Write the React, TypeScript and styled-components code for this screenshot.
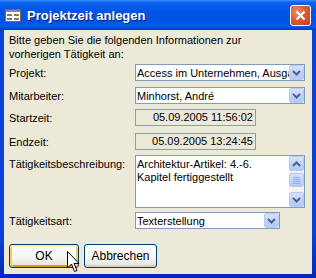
import * as React from 'react';
import styled, { createGlobalStyle } from 'styled-components';

const colors = {
	face: '#ECE9D8',
	frame: '#0842D8',
	frameDark: '#0029B5',
	field: '#7F9DB9',
	text: '#000000',
};

const GlobalStyle = createGlobalStyle`
	html, body {
		margin: 0;
		padding: 0;
		background: ${colors.face};
	}
	* {
		box-sizing: border-box;
	}
`;

const Window = styled.div`
	position: relative;
	width: 316px;
	height: 278px;
	display: flex;
	flex-direction: column;
	background: linear-gradient(to bottom, ${colors.frame} 0%, ${colors.frame} 85%, ${colors.frameDark} 100%);
	font-family: 'Liberation Sans', Arial, sans-serif;
	font-size: 11px;
	color: ${colors.text};
	overflow: hidden;
`;

const TitleBar = styled.div`
	height: 30px;
	display: flex;
	align-items: center;
	padding: 0 5px 0 5px;
	background: linear-gradient(
		to bottom,
		#3D8DFF 0%,
		#0A62F0 8%,
		#0055E6 35%,
		#0053E3 70%,
		#005AF0 88%,
		#0049D8 95%,
		#003CC4 100%
	);
`;

const TitleText = styled.span`
	margin-left: 6px;
	color: #ffffff;
	font-family: 'Liberation Sans', Arial, sans-serif;
	font-weight: bold;
	font-size: 13px;
	text-shadow: 1px 1px 0 #0A1E7A;
`;

const CloseButton = styled.div`
	margin-left: auto;
	width: 21px;
	height: 21px;
	border: 1px solid #ffffff;
	border-radius: 3px;
	background: radial-gradient(circle at 30% 30%, #EE8A6B 0%, #DD5A36 45%, #C43E1C 100%);
	display: flex;
	align-items: center;
	justify-content: center;
`;

const Body = styled.div`
	flex: 1;
	margin: 0 4px 4px;
	background: ${colors.face};
	padding: 3px 5px 0;
	display: flex;
	flex-direction: column;
`;

const Intro = styled.div`
	line-height: 14px;
`;

const Row = styled.div<{ $gap: number; $top?: boolean }>`
	display: flex;
	align-items: ${({ $top }) => ($top ? 'flex-start' : 'center')};
	margin-top: ${({ $gap }) => $gap}px;
`;

const Label = styled.div<{ $top?: boolean }>`
	width: 126px;
	flex-shrink: 0;
	padding-top: ${({ $top }) => ($top ? '3px' : '0')};
`;

const Combo = styled.div<{ $width: number }>`
	width: ${({ $width }) => $width}px;
	height: 17px;
	border: 1px solid ${colors.field};
	background: #ffffff;
	display: flex;
	align-items: center;
	padding-left: 1px;
	white-space: nowrap;
	overflow: hidden;
`;

const ComboText = styled.span`
	flex: 1;
	overflow: hidden;
`;

const DropButton = styled.div`
	width: 15px;
	height: 15px;
	flex-shrink: 0;
	border: 1px solid #B9CBF3;
	border-radius: 2px;
	background: linear-gradient(to bottom, #D7E2FC 0%, #C2D3FA 50%, #B3C8F6 100%);
	display: flex;
	align-items: center;
	justify-content: center;
`;

const DateBox = styled.div`
	width: 121px;
	height: 17px;
	border: 1px solid #8E9DAE;
	background: ${colors.face};
	text-align: right;
	padding-right: 2px;
	line-height: 15px;
`;

const Memo = styled.div`
	width: 170px;
	height: 53px;
	border: 1px solid ${colors.field};
	background: #ffffff;
	display: flex;
`;

const MemoText = styled.div`
	flex: 1;
	padding: 2px 0 0 1px;
	line-height: 13px;
`;

const ScrollBar = styled.div`
	width: 15px;
	display: flex;
	flex-direction: column;
	background: #F4F3EE;
`;

const ScrollButton = styled.div`
	height: 15px;
	border: 1px solid #B9CBF3;
	border-radius: 2px;
	background: linear-gradient(to bottom, #D7E2FC 0%, #C2D3FA 50%, #B3C8F6 100%);
	display: flex;
	align-items: center;
	justify-content: center;
`;

const Thumb = styled(ScrollButton)`
	margin-top: 2px;
	height: 14px;
	flex-direction: column;
	gap: 1px;
`;

const Grip = styled.div`
	width: 7px;
	height: 1px;
	background: #8CB0F8;
`;

const Spacer = styled.div`
	flex: 1;
`;

const ButtonRow = styled.div`
	display: flex;
	gap: 5px;
	margin-top: 15px;
`;

const PushButton = styled.div<{ $width: number; $focused?: boolean }>`
	width: ${({ $width }) => $width}px;
	height: 24px;
	border: 1px solid #003C74;
	border-radius: 3px;
	background: linear-gradient(to bottom, #FFFFFF 0%, #F4F4F0 60%, #E3E2DA 100%);
	display: flex;
	align-items: center;
	justify-content: center;
	font-size: 12px;
	box-shadow: ${({ $focused }) => (
		$focused
			? 'inset 0 2px 0 #FFE9B5, inset 2px 0 0 #FBC761, inset -2px 0 0 #FBC761, inset 0 -2px 0 #E59700'
			: 'inset 0 -2px 0 #D6D0C5'
	)};
`;

const Cursor = styled.svg`
	position: absolute;
	left: 67px;
	top: 251px;
`;

const FormIcon = () => (
	<svg width="16" height="13" viewBox="0 0 16 13">
		<rect x="0.5" y="0.5" width="15" height="12" fill="#ffffff" stroke="#6B6B6B" />
		<rect x="1" y="1" width="14" height="2" fill="#8A8A8A" />
		<rect x="2" y="5" width="5" height="2" fill="#7A7A7A" />
		<rect x="9" y="5" width="5" height="2" fill="#7A7A7A" />
		<rect x="2" y="9" width="5" height="2" fill="#7A7A7A" />
		<rect x="9" y="9" width="5" height="2" fill="#7A7A7A" />
	</svg>
);

const Chevron = ({ up }: { up?: boolean }) => (
	<svg width="9" height="6" viewBox="0 0 9 6">
		<path
			d={up ? 'M1 5 L4.5 1.5 L8 5' : 'M1 1 L4.5 4.5 L8 1'}
			fill="none"
			stroke="#4D6185"
			strokeWidth="2"
		/>
	</svg>
);

const ComboField = ({ text, width }: { text: string; width: number }) => (
	<Combo $width={width}>
		<ComboText>{text}</ComboText>
		<DropButton>
			<Chevron />
		</DropButton>
	</Combo>
);

export default function App() {
	return (
		<>
			<GlobalStyle />
			<Window>
				<TitleBar>
					<FormIcon />
					<TitleText>Projektzeit anlegen</TitleText>
					<CloseButton>
						<svg width="11" height="11" viewBox="0 0 11 11">
							<path d="M1.5 1.5 L9.5 9.5 M9.5 1.5 L1.5 9.5" stroke="#ffffff" strokeWidth="2.2" />
						</svg>
					</CloseButton>
				</TitleBar>
				<Body>
					<Intro>
						Bitte geben Sie die folgenden Informationen zur
						<br />
						vorherigen Tätigkeit an:
					</Intro>
					<Row $gap={3}>
						<Label>Projekt:</Label>
						<ComboField text="Access im Unternehmen, Ausgabe 5/2005" width={170} />
					</Row>
					<Row $gap={6}>
						<Label>Mitarbeiter:</Label>
						<ComboField text="Minhorst, André" width={170} />
					</Row>
					<Row $gap={5}>
						<Label>Startzeit:</Label>
						<DateBox>05.09.2005 11:56:02</DateBox>
					</Row>
					<Row $gap={7}>
						<Label>Endzeit:</Label>
						<DateBox>05.09.2005 13:24:45</DateBox>
					</Row>
					<Row $gap={5} $top>
						<Label $top>Tätigkeitsbeschreibung:</Label>
						<Memo>
							<MemoText>
								Architektur-Artikel: 4.-6.
								<br />
								Kapitel fertiggestellt
							</MemoText>
							<ScrollBar>
								<ScrollButton>
									<Chevron up />
								</ScrollButton>
								<Thumb>
									<Grip />
									<Grip />
									<Grip />
									<Grip />
								</Thumb>
								<Spacer />
								<ScrollButton>
									<Chevron />
								</ScrollButton>
							</ScrollBar>
						</Memo>
					</Row>
					<Row $gap={4}>
						<Label>Tätigkeitsart:</Label>
						<ComboField text="Texterstellung" width={145} />
					</Row>
					<ButtonRow>
						<PushButton $width={70} $focused>OK</PushButton>
						<PushButton $width={73}>Abbrechen</PushButton>
					</ButtonRow>
				</Body>
				<Cursor width="13" height="22" viewBox="0 0 13 22">
					<path
						d="M0.5 0.5 L0.5 17 L4.5 13 L7.5 20.5 L10 19.5 L7 12.5 L12 12.5 Z"
						fill="#ffffff"
						stroke="#000000"
						strokeWidth="1"
					/>
				</Cursor>
			</Window>
		</>
	);
}
